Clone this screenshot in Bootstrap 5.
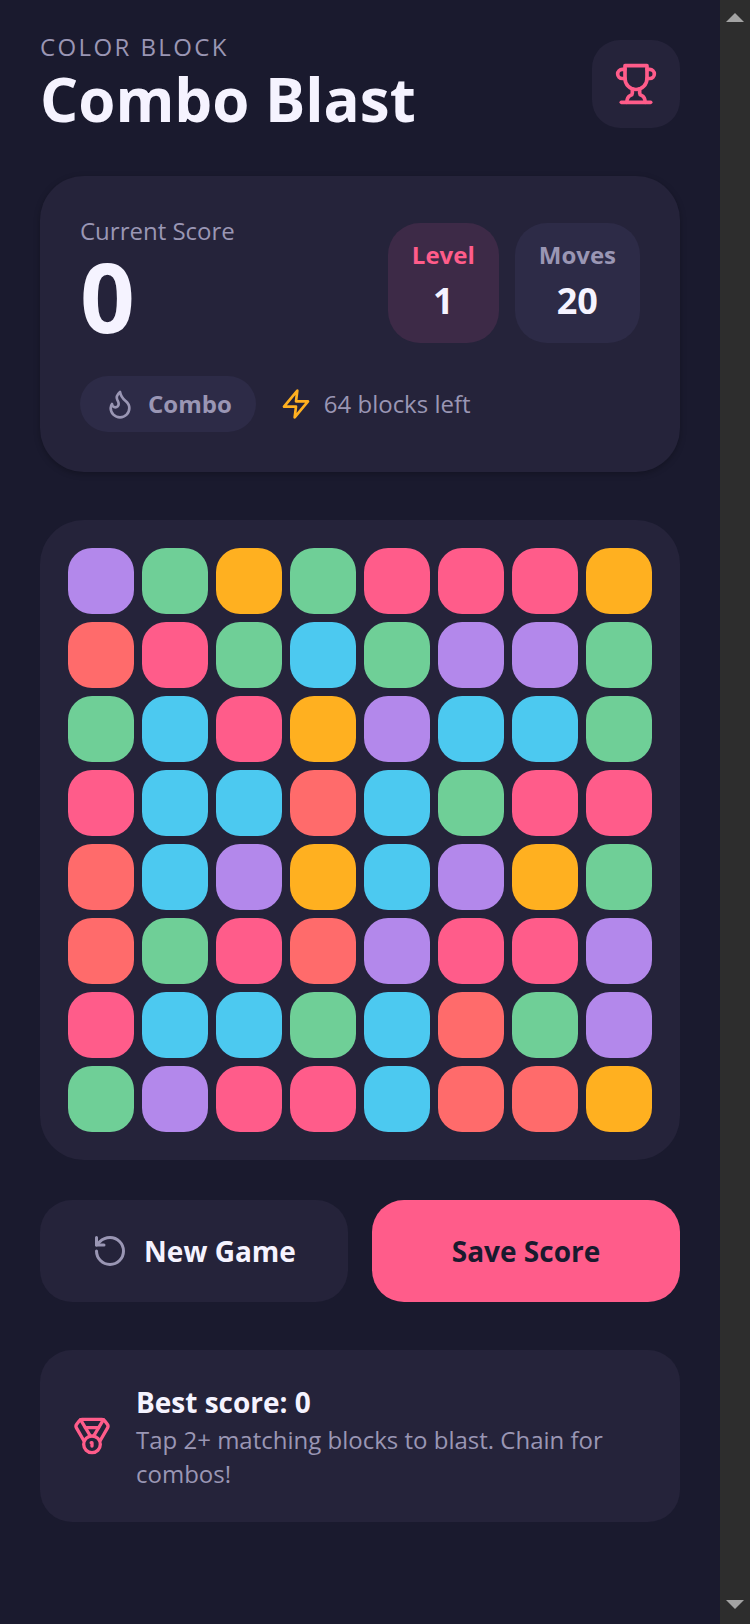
<!DOCTYPE html>
<html lang="en">
  <head>
    <meta charset="UTF-8" />
    <meta name="viewport" content="width=device-width, initial-scale=1.0" />
    <title>Combo Blast</title>
    <link
      href="https://cdn.jsdelivr.net/npm/bootstrap@5.3.3/dist/css/bootstrap.min.css"
      rel="stylesheet"
    />
    <style>
      html,
      body {
        height: 100%;
      }
      body {
        background: #1a1a2e;
        font-family: "Open Sans", sans-serif;
        color: #f5f3ff;
        overflow: hidden;
      }
      .game-page {
        width: 720px;
        padding: 32px 40px 0;
      }
      .fake-scrollbar {
        width: 30px;
        background: #2d2d2d;
        padding: 13px 0 15px;
      }
      .arrow-up,
      .arrow-down {
        width: 0;
        height: 0;
        border-left: 9px solid transparent;
        border-right: 9px solid transparent;
      }
      .arrow-up {
        border-bottom: 9px solid #a3a3a3;
      }
      .arrow-down {
        border-top: 9px solid #a3a3a3;
      }
      .eyebrow {
        font-size: 24px;
        line-height: 30px;
        letter-spacing: 2.4px;
        color: #9a96b4;
      }
      .game-title {
        font-size: 60px;
        line-height: 74px;
        font-weight: 700;
        margin: 0;
      }
      .trophy-btn {
        width: 88px;
        height: 88px;
        margin-top: 8px;
        border-radius: 28px;
        background: #25233a;
      }
      .panel {
        background: #25233a;
      }
      .score-panel {
        height: 296px;
        margin-top: 40px;
        padding: 40px;
        border-radius: 44px;
        box-shadow: 0 2px 6px rgba(0, 0, 0, 0.25);
      }
      .muted-text {
        color: #9a96b4;
      }
      .score-label {
        font-size: 24px;
        line-height: 30px;
      }
      .score-value {
        font-size: 96px;
        line-height: 100px;
        font-weight: 700;
      }
      .stat-row {
        padding-top: 7px;
      }
      .stat-box {
        height: 120px;
        padding: 0 24px 2px;
        border-radius: 32px;
        background: #2d2b47;
        text-align: center;
      }
      .stat-box.level-box {
        background: #3d2a47;
      }
      .stat-label {
        font-size: 24px;
        line-height: 32px;
        font-weight: 700;
        margin-bottom: 6px;
        color: #9a96b4;
      }
      .level-box .stat-label {
        color: #ff5c8a;
      }
      .stat-value {
        font-size: 36px;
        line-height: 48px;
        font-weight: 700;
      }
      .combo-row {
        margin-top: 30px;
      }
      .combo-pill {
        height: 56px;
        padding: 0 24px;
        gap: 12px;
        border-radius: 28px;
        background: #2d2b47;
        font-size: 24px;
        font-weight: 700;
        color: #9a96b4;
      }
      .blocks-left {
        gap: 12px;
        font-size: 24px;
      }
      .board {
        display: grid;
        grid-template-columns: repeat(8, 1fr);
        gap: 8px;
        margin-top: 48px;
        padding: 28px;
        border-radius: 44px;
      }
      .block {
        height: 66px;
        border-radius: 24px;
      }
      .block-p { background: #b388eb; }
      .block-g { background: #6fcf97; }
      .block-o { background: #ffb020; }
      .block-k { background: #ff5c8a; }
      .block-r { background: #ff6b6b; }
      .block-b { background: #4cc9f0; }
      .actions {
        margin-top: 16px;
      }
      .action-btn {
        width: 100%;
        height: 102px;
        border: 0;
        border-radius: 32px;
        font-size: 28px;
        font-weight: 700;
      }
      .new-game,
      .new-game:hover {
        background: #25233a;
        color: #f5f3ff;
      }
      .save-score,
      .save-score:hover {
        background: #ff5c8a;
        color: #1a1a2e;
      }
      .tip-panel {
        height: 172px;
        margin-top: 48px;
        padding: 0 32px;
        border-radius: 32px;
      }
      .tip-title {
        font-size: 28px;
        line-height: 40px;
        margin-bottom: 1px;
        font-weight: 700;
      }
      .tip-text {
        font-size: 24px;
        line-height: 34px;
      }
    </style>
  </head>
  <body>
    <div class="d-flex h-100">
      <div class="game-page">
        <!-- Header -->
        <div class="d-flex justify-content-between align-items-start">
          <div>
            <div class="eyebrow">COLOR BLOCK</div>
            <h1 class="game-title">Combo Blast</h1>
          </div>
          <div class="trophy-btn d-flex align-items-center justify-content-center">
            <svg width="44" height="44" viewBox="0 0 24 24" fill="none" stroke="#ff5c8a" stroke-width="2" stroke-linecap="round" stroke-linejoin="round"><path d="M6 9H4.5a2.5 2.5 0 0 1 0-5H6"/><path d="M18 9h1.5a2.5 2.5 0 0 0 0-5H18"/><path d="M4 22h16"/><path d="M10 14.66V17c0 .55-.47.98-.97 1.21C7.85 18.75 7 20.24 7 22"/><path d="M14 14.66V17c0 .55.47.98.97 1.21C16.15 18.75 17 20.24 17 22"/><path d="M18 2H6v7a6 6 0 0 0 12 0V2Z"/></svg>
          </div>
        </div>

        <!-- Score -->
        <div class="panel score-panel">
          <div class="d-flex justify-content-between">
            <div>
              <div class="score-label muted-text">Current Score</div>
              <div class="score-value">0</div>
            </div>
            <div class="stat-row d-flex gap-3">
              <div class="stat-box level-box d-flex flex-column justify-content-center">
                <div class="stat-label">Level</div>
                <div class="stat-value">1</div>
              </div>
              <div class="stat-box d-flex flex-column justify-content-center">
                <div class="stat-label">Moves</div>
                <div class="stat-value">20</div>
              </div>
            </div>
          </div>
          <div class="combo-row d-flex align-items-center gap-4">
            <div class="combo-pill d-flex align-items-center">
              <svg width="32" height="32" viewBox="0 0 24 24" fill="none" stroke="#9a96b4" stroke-width="2" stroke-linecap="round" stroke-linejoin="round"><path d="M8.5 14.5A2.5 2.5 0 0 0 11 12c0-1.38-.5-2-1-3-1.072-2.143-.224-4.054 2-6 .5 2.5 2 4.9 4 6.5 2 1.6 3 3.5 3 5.5a7 7 0 1 1-14 0c0-1.153.433-2.294 1-3a2.5 2.5 0 0 0 2.5 2.5z"/></svg>
              Combo
            </div>
            <div class="blocks-left muted-text d-flex align-items-center">
              <svg width="32" height="32" viewBox="0 0 24 24" fill="none" stroke="#ffb020" stroke-width="2" stroke-linecap="round" stroke-linejoin="round"><polygon points="13 2 3 14 12 14 11 22 21 10 12 10 13 2"/></svg>
              64 blocks left
            </div>
          </div>
        </div>

        <!-- Board -->
        <div class="panel board" id="board"></div>

        <!-- Actions -->
        <div class="row g-4 actions">
          <div class="col-6">
            <button class="btn action-btn new-game d-flex align-items-center justify-content-center gap-3">
              <svg width="36" height="36" viewBox="0 0 24 24" fill="none" stroke="#9a96b4" stroke-width="2" stroke-linecap="round" stroke-linejoin="round"><path d="M3 12a9 9 0 1 0 9-9 9.75 9.75 0 0 0-6.74 2.74L3 8"/><path d="M3 3v5h5"/></svg>
              New Game
            </button>
          </div>
          <div class="col-6">
            <button class="btn action-btn save-score">Save Score</button>
          </div>
        </div>

        <!-- Tip -->
        <div class="panel tip-panel d-flex align-items-center gap-4">
          <svg class="flex-shrink-0" width="40" height="40" viewBox="0 0 24 24" fill="none" stroke="#ff5c8a" stroke-width="2" stroke-linecap="round" stroke-linejoin="round"><path d="M7.21 15 2.66 7.14a2 2 0 0 1 .13-2.2L4.4 2.8A2 2 0 0 1 6 2h12a2 2 0 0 1 1.6.8l1.6 2.14a2 2 0 0 1 .14 2.2L16.79 15"/><path d="M11 12 5.12 2.2"/><path d="m13 12 5.88-9.8"/><path d="M8 7h8"/><circle cx="12" cy="17" r="5"/><path d="M12 18v-2h-.5"/></svg>
          <div>
            <div class="tip-title">Best score: 0</div>
            <div class="tip-text muted-text">Tap 2+ matching blocks to blast. Chain for combos!</div>
          </div>
        </div>
      </div>

      <div class="fake-scrollbar d-flex flex-column justify-content-between align-items-center">
        <div class="arrow-up"></div>
        <div class="arrow-down"></div>
      </div>
    </div>

    <script src="https://cdn.jsdelivr.net/npm/bootstrap@5.3.3/dist/js/bootstrap.bundle.min.js"></script>
    <script>
      const rows = [
        "pgogkkko",
        "rkgbgppg",
        "gbkopbbg",
        "kbbrbgkk",
        "rbpobpog",
        "rgkrpkkp",
        "kbbgbrgp",
        "gpkkbrro",
      ];
      const board = document.getElementById("board");
      rows.join("").split("").forEach((color) => {
        const block = document.createElement("div");
        block.classList.add("block", "block-" + color);
        board.appendChild(block);
      });
    </script>
  </body>
</html>
